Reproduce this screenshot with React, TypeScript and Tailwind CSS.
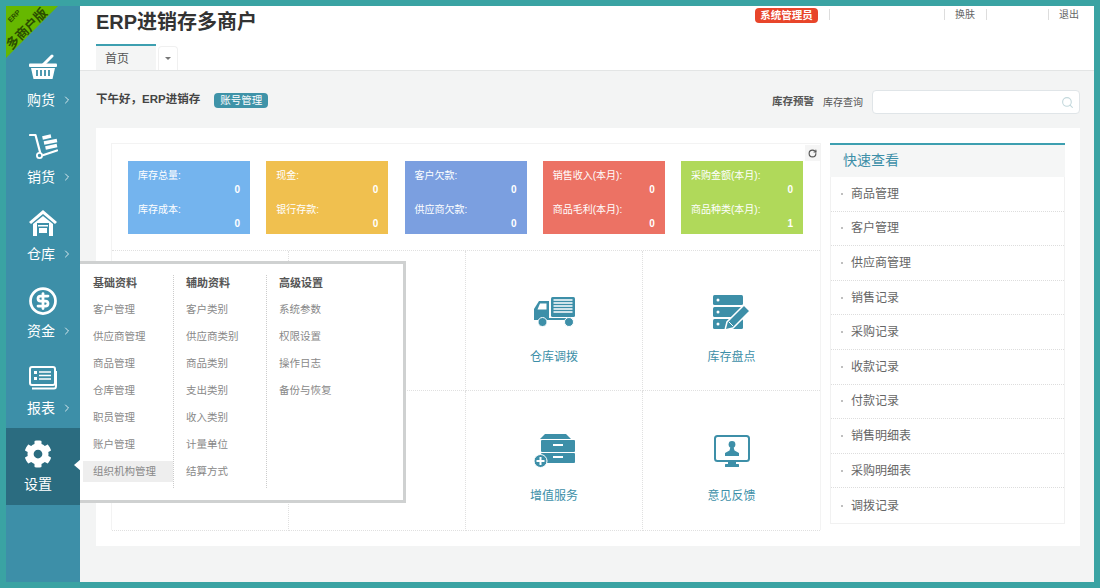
import type { ReactNode } from 'react';
import { ChevronRight, CircleDollarSign, RotateCw, Search } from 'lucide-react';
import { FaCog } from 'react-icons/fa';

const TEAL = '#3d8fa8';

function Basket() {
  return (
    <svg width="28" height="25" viewBox="0 0 28 25" fill="#fff" className="-translate-y-[4px]">
      <path d="M14 11 L23 2" stroke="#fff" strokeWidth="3" strokeLinecap="round" />
      <rect x="0" y="9.5" width="28" height="3.5" rx="1" />
      <path d="M2 14 H26 L23.5 25 H4.5 Z" />
      <path d="M8 16 V22 M12 16 V22 M16 16 V22 M20 16 V22" stroke={TEAL} strokeWidth="1.8" />
    </svg>
  );
}

function Trolley() {
  return (
    <svg width="29" height="26" viewBox="0 0 29 26" fill="none" stroke="#fff" className="-translate-y-[1px]">
      <path d="M1 2 H6.5 L11 19" strokeWidth="2.2" strokeLinecap="round" strokeLinejoin="round" />
      <circle cx="10.5" cy="22.5" r="2.6" strokeWidth="1.8" />
      <path d="M14.5 22 L28 17.5" strokeWidth="2.2" strokeLinecap="round" />
      <path d="M13.5 5 L22 3 M15 10 L28 7.5 M16.5 15 L28 12.5" strokeWidth="3.4" />
    </svg>
  );
}

function House() {
  return (
    <svg width="28" height="26" viewBox="0 0 28 26" fill="#fff" className="-translate-y-[1px]">
      <path d="M14 0 L28 12 L26 14 L14 4 L2 14 L0 12 Z" />
      <path d="M4 14 L14 6 L24 14 V26 H4 Z" />
      <rect x="8" y="13" width="12" height="13" fill={TEAL} />
      <rect x="10" y="18" width="8" height="5" fill="#fff" />
      <rect x="9" y="15" width="10" height="1.5" fill="#fff" />
    </svg>
  );
}

function Report() {
  return (
    <svg width="28" height="25" viewBox="0 0 28 25" fill="none" stroke="#fff">
      <rect x="1" y="1" width="25" height="18" rx="2" strokeWidth="2" />
      <path d="M3 22.5 H25 Q27 22.5 27 20 V5" strokeWidth="2" />
      <path d="M5 5 H8 V8 H5 Z M5 11 H8 V14 H5 Z" fill="#fff" stroke="none" />
      <path d="M10 6 H22 M10 9.5 H22 M10 13 H22" strokeWidth="1.4" />
    </svg>
  );
}

function Truck() {
  return (
    <svg width="41" height="30" viewBox="0 0 41 30" fill={TEAL}>
      <rect x="17" y="0" width="24" height="20" rx="1.5" />
      <path d="M19.5 3 H38.5 M19.5 6 H38.5 M19.5 9 H38.5 M19.5 12 H38.5 M19.5 15 H38.5" stroke="#fff" strokeWidth="1.5" />
      <path d="M5 4 H15 V23 H0 V12 Z" />
      <path d="M6 6.5 H12.5 V12.5 H3.5 Z" fill="#fff" />
      <rect x="14" y="21" width="24" height="2" />
      <circle cx="8.5" cy="25" r="4.5" stroke="#fff" strokeWidth="1" />
      <circle cx="35" cy="25" r="4.5" stroke="#fff" strokeWidth="1" />
    </svg>
  );
}

function ServerPen() {
  return (
    <svg width="37" height="34" viewBox="0 0 37 34" fill={TEAL}>
      <rect x="0" y="0" width="30" height="10" rx="1.5" />
      <rect x="0" y="12" width="30" height="10" rx="1.5" />
      <rect x="0" y="24" width="30" height="10" rx="1.5" />
      <circle cx="5" cy="5" r="1.5" fill="#fff" />
      <circle cx="5" cy="17" r="1.5" fill="#fff" />
      <circle cx="5" cy="29" r="1.5" fill="#fff" />
      <path d="M31 10 L37 16 L20 33 L12 35 L14 27 Z" stroke="#fff" strokeWidth="1.5" />
      <path d="M16 27 L20 31" stroke="#fff" strokeWidth="1" />
    </svg>
  );
}

function DrawerPlus() {
  return (
    <svg width="41" height="34" viewBox="0 0 41 34" fill={TEAL}>
      <path d="M11 0 H32 L37 5 H6 Z" />
      <rect x="7" y="6" width="34" height="12" rx="1" />
      <rect x="7" y="19" width="34" height="10" rx="1" />
      <rect x="19" y="10" width="10" height="2" fill="#fff" />
      <rect x="19" y="22" width="10" height="2" fill="#fff" />
      <circle cx="6.5" cy="27" r="6.5" stroke="#fff" strokeWidth="1" />
      <path d="M6.5 23 V31 M2.5 27 H10.5" stroke="#fff" strokeWidth="2" />
    </svg>
  );
}

function MonitorUser() {
  return (
    <svg width="36" height="32" viewBox="0 0 36 32" fill={TEAL}>
      <rect x="1" y="1" width="34" height="25" rx="2.5" fill="none" stroke={TEAL} strokeWidth="2" />
      <circle cx="18" cy="9.5" r="3.4" />
      <path d="M16.5 12 H19.5 L20.5 15.5 L25 18 V21 H11 V18 L15.5 15.5 Z" />
      <rect x="14" y="26" width="8" height="3" />
      <rect x="11" y="29" width="14" height="3" rx="0.5" />
    </svg>
  );
}

const navItems: { label: string; icon: ReactNode; active?: boolean }[] = [
  { label: '购货', icon: <Basket /> },
  { label: '销货', icon: <Trolley /> },
  { label: '仓库', icon: <House /> },
  { label: '资金', icon: <CircleDollarSign size={30} color="#fff" strokeWidth={2.2} /> },
  { label: '报表', icon: <Report /> },
  { label: '设置', icon: <FaCog size={28} color="#fff" />, active: true },
];

const stats = [
  { color: 'bg-[#74b4ee]', rows: [['库存总量:', '0'], ['库存成本:', '0']] },
  { color: 'bg-[#f0c04f]', rows: [['现金:', '0'], ['银行存款:', '0']] },
  { color: 'bg-[#7b9fe0]', rows: [['客户欠款:', '0'], ['供应商欠款:', '0']] },
  { color: 'bg-[#ec7264]', rows: [['销售收入(本月):', '0'], ['商品毛利(本月):', '0']] },
  { color: 'bg-[#b0d95a]', rows: [['采购金额(本月):', '0'], ['商品种类(本月):', '1']] },
];

const quickLinks = ['商品管理', '客户管理', '供应商管理', '销售记录', '采购记录', '收款记录', '付款记录', '销售明细表', '采购明细表', '调拨记录'];

const menuColumns = [
  { title: '基础资料', width: 'w-[91px]', pad: 'pl-[10px]', items: ['客户管理', '供应商管理', '商品管理', '仓库管理', '职员管理', '账户管理', '组织机构管理'] },
  { title: '辅助资料', width: 'w-[93px]', pad: 'pl-[12px]', items: ['客户类别', '供应商类别', '商品类别', '支出类别', '收入类别', '计量单位', '结算方式'] },
  { title: '高级设置', width: 'w-[93px]', pad: 'pl-[12px]', items: ['系统参数', '权限设置', '操作日志', '备份与恢复'] },
];

const cells: { label?: string; icon?: ReactNode }[] = [
  {},
  {},
  { label: '仓库调拨', icon: <Truck /> },
  { label: '库存盘点', icon: <ServerPen /> },
  {},
  {},
  { label: '增值服务', icon: <DrawerPlus /> },
  { label: '意见反馈', icon: <MonitorUser /> },
];

function Sidebar() {
  return (
    <aside className="w-[74px] shrink-0 bg-[#3d8fa8] pt-[37px]">
      {navItems.map((item) => (
        <div
          key={item.label}
          className={`relative h-[77px] flex flex-col items-center ${item.active ? 'bg-[#2b6c80] pt-[11px] pr-[10px]' : 'pt-[12px]'}`}
        >
          <div className="h-[30px] flex items-center justify-center">{item.icon}</div>
          <div className={`mt-[5px] flex items-center text-[14px] leading-[20px] text-white ${item.active ? '' : 'pl-[14px]'}`}>
            {item.label}
            {!item.active && <ChevronRight size={12} className="ml-[6px] text-white/80" />}
          </div>
          {item.active && (
            <span className="absolute right-[-1px] top-[31px] border-y-[6px] border-r-[7px] border-y-transparent border-r-white" />
          )}
        </div>
      ))}
    </aside>
  );
}

function TopBar() {
  return (
    <header className="h-[65px] shrink-0 bg-white border-b border-[#e3e5e5] flex justify-between pl-[16px] pr-[15px]">
      <div>
        <h1 className="mt-[3px] text-[20px] leading-[27px] font-bold text-[#333]">ERP进销存多商户</h1>
        <div className="mt-[8px] flex items-end">
          <div className="w-[60px] h-[26px] bg-[#f4f5f5] border-t-2 border-[#3d9fb0] pl-[9px] text-[12px] leading-[26px] text-[#555]">首页</div>
          <div className="ml-[2px] w-[20px] h-[24px] border border-b-0 border-[#f0f0f0] rounded-t-sm flex items-center justify-center">
            <span className="border-x-[3px] border-t-[3px] border-x-transparent border-t-[#777]" />
          </div>
        </div>
      </div>
      <div className="flex items-start text-[10px] leading-[14px] text-[#666]">
        <span className="mt-[2px] h-[15px] w-[63px] rounded-sm bg-[#e8452a] text-center text-[10.5px] font-bold text-white">系统管理员</span>
        <span className="mt-[3px] ml-[11px] h-[11px] w-px bg-[#ddd]" />
        <span className="mt-[3px] ml-[114px] h-[11px] w-px bg-[#ddd]" />
        <span className="mt-[2px] ml-[10px] w-[20px]">换肤</span>
        <span className="mt-[3px] ml-[11px] h-[11px] w-px bg-[#ddd]" />
        <span className="mt-[3px] ml-[61px] h-[11px] w-px bg-[#ddd]" />
        <span className="mt-[2px] ml-[10px] w-[20px]">退出</span>
      </div>
    </header>
  );
}

function GreetingRow() {
  return (
    <div className="h-[57px] shrink-0 flex items-center justify-between pl-[16px] pr-[14px] pt-[5px]">
      <div className="flex items-center mb-[4px]">
        <span className="text-[11.5px] font-bold text-[#444]">下午好，ERP进销存</span>
        <span className="ml-[14px] w-[54px] h-[15px] rounded-sm bg-[#3f93a8] text-center text-[10.5px] leading-[15px] text-white">账号管理</span>
      </div>
      <div className="flex items-center">
        <span className="text-[10.5px] font-bold text-[#555]">库存预警</span>
        <span className="ml-[9px] text-[10px] text-[#555]">库存查询</span>
        <div className="ml-[9px] w-[208px] h-[24px] bg-white border border-[#e0e5e8] rounded-sm flex items-center justify-end pr-[5px]">
          <Search size={13} className="text-[#c3d8dc]" />
        </div>
      </div>
    </div>
  );
}

function StatCard({ color, rows }: { color: string; rows: string[][] }) {
  return (
    <div className={`w-[122px] h-[73px] px-[10px] pt-[8px] text-white text-[10px] leading-[14px] ${color}`}>
      {rows.map(([label, value]) => (
        <div key={label} className="h-[34px]">
          <div>{label}</div>
          <div className="text-right font-bold">{value}</div>
        </div>
      ))}
    </div>
  );
}

function QuickList() {
  return (
    <div className="w-[235px] h-[381px] border-t-2 border-[#3d9fb0] flex flex-col">
      <div className="h-[32px] shrink-0 bg-[#f5f6f6] pl-[13px] text-[14px] leading-[30px] text-[#3d8fa8]">快速查看</div>
      <div className="flex-1 border border-t-0 border-[#f1f1f1]">
        {quickLinks.map((name, i) => (
          <div
            key={name}
            className={`h-[34.6px] flex items-center pl-[10px] text-[12px] text-[#666] ${i < quickLinks.length - 1 ? 'border-b border-dotted border-[#ddd]' : ''}`}
          >
            <span className="w-[2px] h-[2px] rounded-full bg-[#aaa] mr-[8px]" />
            {name}
          </div>
        ))}
      </div>
    </div>
  );
}

function Dashboard() {
  return (
    <section className="mx-[16px] w-[984px] h-[418px] bg-white pt-[15px] pl-[15px] flex">
      <div className="w-[710px] h-[387px] border-t border-x border-[#f3f3f3] relative">
        <div className="absolute right-0 top-[1px] w-[15px] h-[16px] bg-[#f5f5f5] flex items-center justify-center">
          <RotateCw size={9} strokeWidth={3} className="text-[#555]" />
        </div>
        <div className="h-[107px] pt-[17px] pl-[16px] flex gap-[16.25px] border-b border-dotted border-[#e0e0e0]">
          {stats.map((s) => (
            <StatCard key={s.rows[0][0]} color={s.color} rows={s.rows} />
          ))}
        </div>
        <div className="grid grid-cols-4 grid-rows-[140px_140px]">
          {cells.map((cell, i) => (
            <div
              key={i}
              className={`flex flex-col items-center border-b border-dotted border-b-[#e0e0e0] ${i % 4 < 3 ? 'border-r border-r-[#e0e0e0]' : ''} ${i < 4 ? 'pt-[43px]' : 'pt-[42px]'}`}
            >
              {cell.icon && <div className="h-[35px] flex items-center">{cell.icon}</div>}
              {cell.label && <div className="mt-[19px] text-[12px] text-[#3d8fa8]">{cell.label}</div>}
            </div>
          ))}
        </div>
      </div>
      <div className="ml-[9px]">
        <QuickList />
      </div>
    </section>
  );
}

function SettingsMenu() {
  return (
    <div className="absolute left-[74px] top-[255px] w-[326px] h-[242px] bg-white border-[3px] border-l-0 border-[#cfd1d1] flex pl-[3px] pt-[11px]">
      {menuColumns.map((col, c) => (
        <div key={col.title} className={`${col.width} h-[213px] ${c < 2 ? 'border-r border-dotted border-[#ccc]' : ''}`}>
          <div className={`${col.pad} text-[11px] leading-[16px] font-bold text-[#555]`}>{col.title}</div>
          <div className="mt-[5px]">
            {col.items.map((item) => (
              <div key={item} className="h-[27px] flex items-center">
                <span className={`${col.pad} w-full h-[21px] text-[10.5px] leading-[21px] text-[#888] ${item === '组织机构管理' ? 'bg-[#eeeeee]' : ''}`}>{item}</span>
              </div>
            ))}
          </div>
        </div>
      ))}
    </div>
  );
}

export default function App() {
  return (
    <div
      className="relative w-[1100px] h-[588px] overflow-hidden border-[6px] border-[#3aa3a3] flex bg-[#f3f4f4]"
      style={{ fontFamily: '"Liberation Sans", "Noto Sans CJK SC", sans-serif' }}
    >
      <Sidebar />
      <main className="flex-1 flex flex-col min-w-0">
        <TopBar />
        <GreetingRow />
        <Dashboard />
      </main>
      <SettingsMenu />
      <div className="absolute left-0 top-0 w-[52px] h-[52px] bg-[#66b800] [clip-path:polygon(0_0,100%_0,0_100%)]" />
      <div className="absolute left-[-14px] top-[-2px] w-[56px] -rotate-45 text-center font-bold text-[#2b4d00]">
        <span className="block text-[7px] leading-[20px]">ERP</span>
        <span className="block text-[13px] leading-[16px]">多商户版</span>
      </div>
    </div>
  );
}
